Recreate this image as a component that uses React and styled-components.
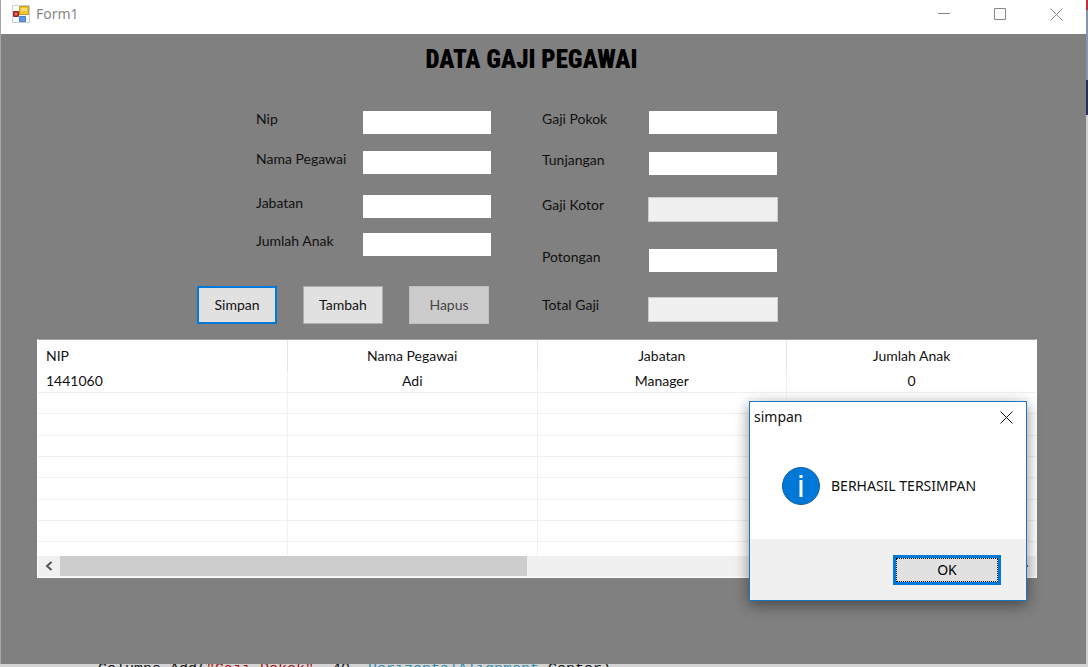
import React from "react";
import styled, { createGlobalStyle, css } from "styled-components";

const Global = createGlobalStyle`
  * { box-sizing: border-box; }
  body { margin: 0; background: #c8c8c8; overflow: hidden; }
  button, input { font: inherit; margin: 0; }
`;
const ui = `"Noto Sans", "Open Sans", sans-serif`;
const classic = `Lato, Roboto, "Liberation Sans", sans-serif`;

const Desktop = styled.div`
  min-height: 100vh;
  display: flex;
  flex-direction: column;
  overflow: hidden;
  background: linear-gradient(#c0303a 0 10px, #8a93ae 10px 80px, #293056 80px 115px, #d0d0d0 115px);
`;
const Window = styled.main`
  flex: 1;
  display: flex;
  flex-direction: column;
  margin: 0 2px 0 0;
  border-left: 1px solid #a6a6a6;
  background: #808080;
  font: 14px/16px ${classic};
  color: #111;
`;
const TitleBar = styled.header`
  height: 34px;
  display: flex;
  align-items: center;
  background: #fff;
  padding: 0 12px 6px 11px;
  color: #888;
  font: 14px/20px ${ui};
`;
const TitleText = styled.span`
  flex: 1;
  padding-left: 6px;
`;
const Controls = styled.div`
  display: flex;
  gap: 20px;
`;
const ControlButton = styled.button`
  width: 36px;
  height: 28px;
  display: grid;
  place-items: center;
  border: 0;
  padding: 0;
  background: transparent;
  color: ${(p) => (p.$dark ? "#111" : "#888")};
`;
const Heading = styled.h1`
  margin: 0;
  padding: 10px 72px 0 48px;
  text-align: center;
  font: 900 25px/32px Impact, "Roboto Condensed", "Liberation Sans Narrow", sans-serif;
  color: #000;
`;
const Form = styled.form`
  display: flex;
  align-items: flex-start;
  gap: 51px;
  padding: 35px 0 15px 196px;
`;
const Side = styled.div`
  display: flex;
  flex-direction: column;
`;
const Fields = styled.div`
  padding-left: ${(p) => p.$indent}px;
`;
const Field = styled.label`
  display: flex;
  align-items: flex-start;
  height: 23px;
  margin-bottom: ${(p) => p.$after}px;
`;
const Caption = styled.span`
  width: 107px;
`;
const TextBox = styled.input`
  width: 128px;
  height: 23px;
  border: 0;
  padding: 0 4px;
  background: #fff;
  ${(p) => p.disabled && css`
    width: 130px;
    height: 25px;
    margin: 0 -1px;
    background: #f0f0f0;
    border: 1px solid #ccc;
  `}
`;
const Actions = styled.div`
  display: flex;
  gap: 26px;
  margin-top: 30px;
`;
const Action = styled.button`
  width: 80px;
  height: 38px;
  padding: 0;
  color: ${(p) => (p.disabled ? "#444" : "#111")};
  background: ${(p) => (p.disabled ? "#ccc" : "#e1e1e1")};
  border: ${(p) => (p.$primary ? "2px solid #0078d7" : "1px solid #adadad")};
  border-color: ${(p) => (p.disabled ? "#bfbfbf" : "")};
`;
const ListView = styled.section`
  margin: 0 49px 40px 36px;
  background: #fff;
  border: 1px solid #fff;
  border-top-color: #a0a0a0;
`;
const Table = styled.table`
  width: 100%;
  table-layout: fixed;
  border-collapse: collapse;
`;
const HeadCell = styled.th`
  height: 31px;
  padding: 0 8px;
  font-weight: normal;
  text-align: ${(p) => (p.$start ? "left" : "center")};
  border-right: 1px solid #e5e5e5;
  &:last-child { border-right: 0; }
`;
const Row = styled.tr`
  height: ${(p) => p.$h}px;
`;
const Cell = styled.td`
  padding: 0 8px;
  text-align: ${(p) => (p.$start ? "left" : "center")};
  border-right: 1px solid #f0f0f0;
  border-bottom: ${(p) => (p.$last ? 0 : 1)}px solid #f0f0f0;
  &:last-child { border-right: 0; }
`;
const ScrollBar = styled.div`
  display: flex;
  align-items: stretch;
  height: 21px;
  background: #f0f0f0;
  border-bottom: 1px solid #f4f4f4;
`;
const ScrollButton = styled.button`
  width: 22px;
  padding: 0;
  border: 0;
  background: transparent;
  display: grid;
  place-items: center;
  color: #555;
`;
const Track = styled.div`
  flex: 1;
  display: flex;
`;
const Thumb = styled.div`
  width: 49%;
  background: #cdcdcd;
`;
const CodeLine = styled.div`
  height: 3px;
  overflow: hidden;
  background: #d4d4d4;
  padding-left: 98px;
  white-space: pre;
  font: 15px/12px "Liberation Mono", monospace;
  color: #111;
`;
const CodeToken = styled.span`
  color: ${(p) => p.$color};
`;
const Dialog = styled.div`
  position: absolute;
  top: 401px;
  right: 61px;
  width: 278px;
  background: #fff;
  border: 1px solid #1a74c0;
  box-shadow: 0 4px 14px rgba(0, 0, 0, 0.45);
  font: 14px/20px ${ui};
  color: #111;
`;
const DialogTitle = styled.div`
  display: flex;
  align-items: center;
  justify-content: space-between;
  height: 30px;
  padding: 0 2px 0 4px;
`;
const DialogBody = styled.div`
  display: flex;
  align-items: center;
  gap: 11px;
  height: 107px;
  padding-left: 32px;
`;
const DialogFooter = styled.div`
  display: flex;
  justify-content: flex-end;
  height: 61px;
  padding: 16px 25px 0 0;
  background: #f0f0f0;
`;
const OkButton = styled.button`
  width: 108px;
  height: 30px;
  padding: 0;
  border: 3px solid #0078d7;
  background: #e1e1e1;
  outline: 1px dotted #111;
  outline-offset: -4px;
`;

const CloseIcon = () => (
  <svg width="13" height="13" viewBox="0 0 13 13" stroke="currentColor" fill="none"><path d="M.5.5l12 12M12.5.5l-12 12" /></svg>
);
const Chevron = ({ right }) => (
  <svg width="8" height="10" viewBox="0 0 8 10" stroke="currentColor" strokeWidth="2" fill="none">
    <path d={right ? "M1.5 1L6 5L1.5 9" : "M6.5 1L2 5L6.5 9"} />
  </svg>
);
const FormIcon = () => (
  <svg width="18" height="18" viewBox="0 0 18 18">
    <path fill="#fafafa" stroke="#c9d0d6" d="M.5.5h17v17H.5z" />
    <path fill="#c9302c" stroke="#8f2d2a" d="M1.500 6.500h5v5h-5z" />
    <path fill="#e8806f" d="M3 8h2v2H3z" />
    <path fill="#f0c52c" stroke="#c39a22" d="M7.500 1.500h9v8h-9z" />
    <path fill="#f8df70" d="M9 3h6v3H9z" />
    <path fill="#5d97e4" stroke="#4a7fc8" d="M7.500 11.500h6v5h-6z" />
  </svg>
);

const left = [["Nip", 17], ["Nama Pegawai", 21], ["Jabatan", 15], ["Jumlah Anak", 0]];
const right = [["Gaji Pokok", 18], ["Tunjangan", 22], ["Gaji Kotor", 29], ["Potongan", 25], ["Total Gaji", 0]];
const columns = ["NIP", "Nama Pegawai", "Jabatan", "Jumlah Anak"];
const record = ["1441060", "Adi", "Manager", "0"];
const rowHeights = [21, 21, 22, 21, 21, 22, 21, 21, 15];

export default function App() {
  return (
    <Desktop>
      <Global />
      <Window>
        <TitleBar>
          <FormIcon />
          <TitleText>Form1</TitleText>
          <Controls>
            <ControlButton aria-label="Minimize">
              <svg width="13" height="13" stroke="currentColor"><path d="M0 5.500h12" /></svg>
            </ControlButton>
            <ControlButton aria-label="Maximize">
              <svg width="13" height="13" stroke="currentColor" fill="none"><path d="M.5.5h11v11H.5z" /></svg>
            </ControlButton>
            <ControlButton aria-label="Close"><CloseIcon /></ControlButton>
          </Controls>
        </TitleBar>
        <Heading>DATA GAJI PEGAWAI</Heading>
        <Form onSubmit={(e) => e.preventDefault()}>
          <Side>
            <Fields $indent={59}>
              {left.map(([name, after]) => (
                <Field key={name} $after={after}><Caption>{name}</Caption><TextBox /></Field>
              ))}
            </Fields>
            <Actions>
              <Action $primary>Simpan</Action>
              <Action type="button">Tambah</Action>
              <Action type="button" disabled>Hapus</Action>
            </Actions>
          </Side>
          <Fields $indent={0}>
            {right.map(([name, after]) => (
              <Field key={name} $after={after}>
                <Caption>{name}</Caption>
                <TextBox disabled={name === "Gaji Kotor" || name === "Total Gaji"} />
              </Field>
            ))}
          </Fields>
        </Form>
        <ListView>
          <Table>
            <thead>
              <tr>{columns.map((c, i) => <HeadCell key={c} $start={i === 0}>{c}</HeadCell>)}</tr>
            </thead>
            <tbody>
              {rowHeights.map((h, r) => (
                <Row key={r} $h={h}>
                  {columns.map((c, i) => (
                    <Cell key={c} $start={i === 0} $last={r === rowHeights.length - 1}>{r === 0 ? record[i] : null}</Cell>
                  ))}
                </Row>
              ))}
            </tbody>
          </Table>
          <ScrollBar>
            <ScrollButton aria-label="Scroll left"><Chevron /></ScrollButton>
            <Track><Thumb /></Track>
            <ScrollButton aria-label="Scroll right"><Chevron right /></ScrollButton>
          </ScrollBar>
        </ListView>
      </Window>
      <CodeLine>
        Columns.Add(<CodeToken $color="#a31515">"Gaji Pokok"</CodeToken>, 40, <CodeToken $color="#2b91af">HorizontalAlignment</CodeToken>.Center)
      </CodeLine>
      <Dialog role="dialog" aria-label="simpan">
        <DialogTitle>
          simpan
          <ControlButton $dark aria-label="Close dialog"><CloseIcon /></ControlButton>
        </DialogTitle>
        <DialogBody>
          <svg width="38" height="38" viewBox="0 0 38 38">
            <circle cx="19" cy="19" r="18.500" fill="#0078d7" stroke="#1560a5" />
            <path fill="#fff" d="M17.500 8h3v3h-3zM17.500 13h3v17h-3z" />
          </svg>
          BERHASIL TERSIMPAN
        </DialogBody>
        <DialogFooter><OkButton>OK</OkButton></DialogFooter>
      </Dialog>
    </Desktop>
  );
}
